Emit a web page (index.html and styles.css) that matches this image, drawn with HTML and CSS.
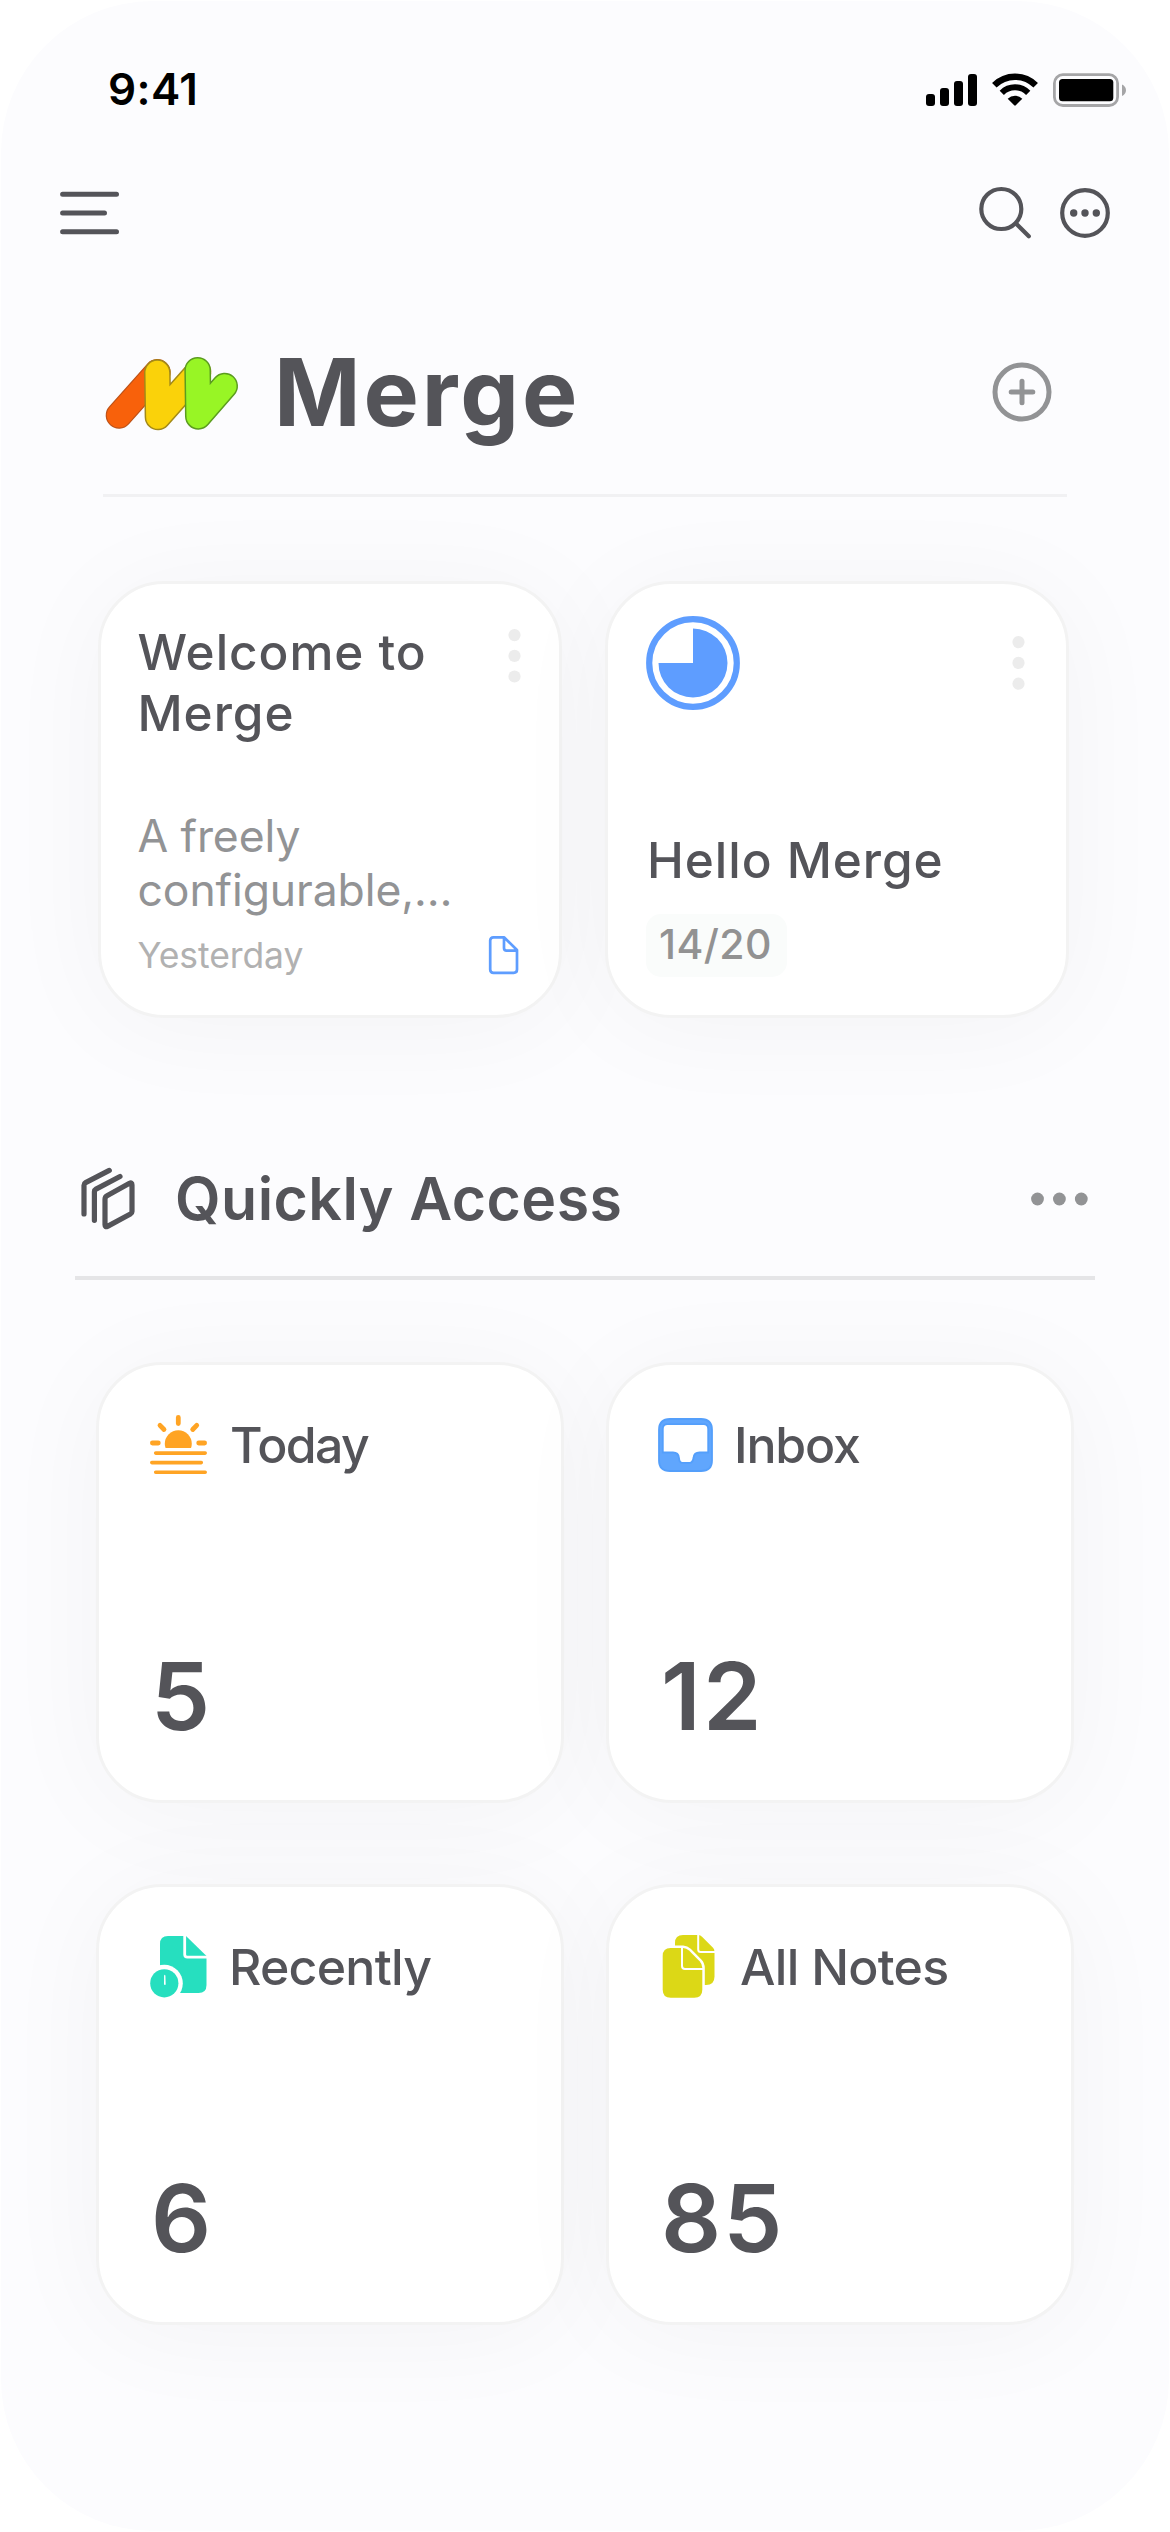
FILE: index.html
```html
<!DOCTYPE html>
<html lang="en">
<head>
<meta charset="utf-8">
<title>Merge</title>
<link rel="stylesheet" href="styles.css">
</head>
<body>
<main class="screen">
  <div class="status-bar">
    <span class="time">9:41</span>
    <svg class="status-icons" width="200" height="34" viewBox="0 0 200 34">
      <rect x="0" y="21" width="9" height="12" rx="3"/>
      <rect x="14" y="15" width="9" height="18" rx="3"/>
      <rect x="28" y="8" width="9" height="25" rx="3"/>
      <rect x="42" y="1" width="9" height="32" rx="3"/>
      <path d="M68.3 12.3a29.3 29.3 0 0 1 41.4 0" fill="none" stroke="#000" stroke-width="6.4"/>
      <path d="M75.8 19.8a18.6 18.6 0 0 1 26.4 0" fill="none" stroke="#000" stroke-width="6"/>
      <path d="M81.7 25.7a10.3 10.3 0 0 1 14.6 0L89.8 32.3q-.8.8-1.6 0z"/>
      <rect x="128.4" y="1.7" width="63.2" height="30.8" rx="8.5" fill="none" stroke="#a5a5a7" stroke-width="2.8"/>
      <rect x="133" y="6" width="54.3" height="22.2" rx="3.5"/>
      <path d="M196 11.5c5.3 2.4 5.3 9.1 0 11.5z" fill="#a5a5a7"/>
    </svg>
  </div>

  <nav class="toolbar">
    <svg width="60" height="44" viewBox="0 0 60 44" class="line-icon">
      <path d="M2.6 3.2H56.5M2.6 22H44.5M2.6 40.7H56.5" stroke-width="5"/>
    </svg>
    <div class="toolbar-actions">
      <svg width="52" height="52" viewBox="0 0 52 52" class="line-icon">
        <circle cx="22.3" cy="22" r="20"/>
        <path d="M37 36.5 49.8 49.3"/>
      </svg>
      <svg width="50" height="50" viewBox="0 0 50 50" class="line-icon">
        <circle cx="25" cy="25" r="22.8"/>
        <g class="solid"><circle cx="13.7" cy="25" r="3.7"/><circle cx="25" cy="25" r="3.7"/><circle cx="36.3" cy="25" r="3.7"/></g>
      </svg>
    </div>
  </nav>

  <header class="page-head">
    <svg width="136" height="77.333" viewBox="72 105 408 232" class="logo">
      <path d="M117 286 232 157" stroke="#bd5218" stroke-width="80"/>
      <path d="M117 286 232 157" stroke="#f8610b" stroke-width="73"/>
      <path d="M232 158 234 291 354 156" stroke="#a38a18" stroke-width="80"/>
      <path d="M232 158 234 291 354 156" stroke="#fad20a" stroke-width="71"/>
      <path d="M353 151 355 289 434 198" stroke="#5b9c1f" stroke-width="80"/>
      <path d="M353 151 355 289 434 198" stroke="#98f525" stroke-width="71"/>
    </svg>
    <h1>Merge</h1>
    <svg width="60" height="60" viewBox="0 0 60 60" class="add">
      <circle cx="30" cy="30" r="27"/>
      <path d="M30 19.2V40.8M19.2 30H40.8"/>
    </svg>
  </header>

  <section class="notes">
    <article class="card note">
      <div class="note-top">
        <h2>Welcome to<br>Merge</h2>
        <svg width="13" height="54" viewBox="0 0 13 54" class="kebab"><circle cx="6.5" cy="6.1" r="6.1"/><circle cx="6.5" cy="26.9" r="6.1"/><circle cx="6.5" cy="47.5" r="6.1"/></svg>
      </div>
      <p class="preview">A freely<br>configurable,…</p>
      <div class="note-foot">
        <span>Yesterday</span>
        <svg width="34" height="40" viewBox="0 0 34 40" class="doc">
          <path d="M6.5 2.3H17L30 15V34.5Q30 37.8 26.7 37.8H6.5Q3.2 37.8 3.2 34.5V5.6Q3.2 2.3 6.5 2.3zM17 2.3V13Q17 15.6 19.6 15.6H30"/>
        </svg>
      </div>
    </article>
    <article class="card project">
      <div class="project-top">
        <svg width="94" height="94" viewBox="0 0 94 94">
          <circle cx="47" cy="47" r="43.8" fill="none" stroke="#5e9dff" stroke-width="6.2"/>
          <path d="M47 47V12.5A34.5 34.5 0 1 1 12.5 47z" fill="#5e9dff"/>
        </svg>
        <svg width="13" height="54" viewBox="0 0 13 54" class="kebab"><circle cx="6.5" cy="6.1" r="6.1"/><circle cx="6.5" cy="26.9" r="6.1"/><circle cx="6.5" cy="47.7" r="6.1"/></svg>
      </div>
      <h2>Hello Merge</h2>
      <span class="badge">14/20</span>
    </article>
  </section>

  <header class="section-head">
    <svg width="54" height="62" viewBox="0 0 54 62" class="line-icon stack">
      <path d="M28.3 2.4 4.6 14.6Q3 15.5 3 17.2V46M39 8.5 15 21.1Q13.4 22 13.4 23.7V52.3"/>
      <path d="M26 27.8 48.5 15.3Q51 14.1 51 17V43.5Q51 45.2 49.4 46.1L26.5 58.4Q24 59.5 24 56.7V31.2Q24 28.9 26 27.8z"/>
    </svg>
    <h2>Quickly Access</h2>
    <svg width="57" height="14" viewBox="0 0 57 14" class="more"><circle cx="6.5" cy="7" r="6.4"/><circle cx="28.4" cy="7" r="6.4"/><circle cx="50.3" cy="7" r="6.4"/></svg>
  </header>

  <section class="quick">
    <article class="card tile today">
      <div class="tile-head">
        <svg width="60" height="64" viewBox="0 0 60 64" fill="none" stroke="#ffa424" stroke-linecap="round">
          <path d="M15.6 35Q14.8 33 14.8 30.7A13.5 13.5 0 0 1 41.8 30.7Q41.8 33 41 35z" fill="#ffa424" stroke="none"/>
          <path d="M28.3 4.5V10.5M10 12.3 14 16.5M46.7 12.3 42.7 16.5M2.4 30H8.3M48.7 30H54.6" stroke-width="4.8"/>
          <path d="M5.7 40.1H55.2M1.8 49.6H51.3M5.7 59.2H55.2" stroke-width="3.6"/>
        </svg>
        <h3>Today</h3>
      </div>
      <strong>5</strong>
    </article>
    <article class="card tile inbox">
      <div class="tile-head">
        <svg width="54" height="64" viewBox="0 0 54 64">
          <path fill-rule="evenodd" d="M10 6H41Q52 6 52 17V47.5Q52 58 41 58H10Q-1 58-1 47.5V17Q-1 6 10 6zM7.500 11.200Q2.800 11.200 2.800 16V39.500H13Q18.500 39.500 19 45 19.300 49.900 22.500 49.900H29.500Q32.700 49.900 33.500 45 34 39.500 39.500 39.500H48.200V16Q48.200 11.200 43.500 11.200z" fill="#60a6fd" stroke="#549ffb" stroke-width="1.8"/>
        </svg>
        <h3>Inbox</h3>
      </div>
      <strong>12</strong>
    </article>
    <article class="card tile recent">
      <div class="tile-head">
        <svg width="59" height="64" viewBox="0 0 59 64" fill="#26dfbf">
          <path d="M18 1H36L56.500 21V50Q56.500 58 48.500 58H10V9Q10 1 18 1z"/>
          <path d="M34.700 0V19.500Q34.700 22.200 37.400 22.200H58" fill="none" stroke="#fff" stroke-width="2.8"/>
          <circle cx="14.3" cy="48.3" r="18.5" fill="#fff"/>
          <circle cx="14.3" cy="48.3" r="14.1"/>
          <path d="M14.100 40.500 14 49.800H15.700L15.400 40.800Q14.800 39 14.100 40.500z" fill="#fff"/>
        </svg>
        <h3>Recently</h3>
      </div>
      <strong>6</strong>
    </article>
    <article class="card tile all">
      <div class="tile-head">
        <svg width="60" height="64" viewBox="0 0 60 64" fill="#dcd816">
          <path d="M23 0H38.500Q40.500.2 42 1.700L53 12.700Q54.500 14.200 54.500 17V41.500Q54.500 50 46 50H15V8Q15 0 23 0z"/>
          <path d="M38.200-1V14.500Q38.200 17 40.700 17H56" fill="none" stroke="#fff" stroke-width="2"/>
          <path d="M10.700 13H23Q26.500 13.200 29 15.600L39.600 26.200Q42.300 29 42.300 33V54.700Q42.300 62.700 34.300 62.700H10.700Q2.700 62.700 2.700 54.700V21Q2.700 13 10.700 13z" stroke="#fff" stroke-width="5" paint-order="stroke"/>
          <path d="M22 12V31Q22 34 25 34H43" fill="none" stroke="#fff" stroke-width="2"/>
        </svg>
        <h3>All Notes</h3>
      </div>
      <strong>85</strong>
    </article>
  </section>
</main>
</body>
</html>
```
FILE: styles.css
```css
* { box-sizing: border-box; margin: 0; padding: 0; }

body {
  background: #fff;
  color: #545459;
  font-family: Inter, "Noto Sans", sans-serif;
}

svg { display: block; flex: none; overflow: visible; }

.screen {
  width: 1168px;
  height: 2530px;
  margin: 1px;
  overflow: hidden;
  border-radius: 152px;
  background: #fcfcfe;
}

.status-bar {
  display: flex;
  align-items: center;
  justify-content: space-between;
  height: 177px;
  padding: 0 43px 2px 107px;
}

.time {
  color: #000;
  font-size: 44px;
  font-weight: 600;
  line-height: 54px;
  letter-spacing: 0.4px;
}

.status-icons { margin-top: 3px; }

.toolbar {
  display: flex;
  align-items: center;
  justify-content: space-between;
  height: 70px;
  padding: 0 59px;
}

.toolbar-actions { display: flex; align-items: center; gap: 29px; }

.line-icon {
  fill: none;
  stroke: #545459;
  stroke-width: 4.2;
  stroke-linecap: round;
  stroke-linejoin: round;
}

.solid { fill: #545459; stroke: none; }

.page-head {
  display: flex;
  align-items: center;
  height: 249px;
  margin: 0 102px;
  padding: 95px 15px 53px 1px;
  border-bottom: 3px solid #f1f1f3;
}

.logo { margin-top: 4px; fill: none; stroke-linecap: round; stroke-linejoin: round; }

.page-head h1 {
  margin-left: 34px;
  font-size: 93px;
  font-weight: 700;
  line-height: 98px;
  letter-spacing: 2.9px;
}

.add {
  margin-left: auto;
  fill: none;
  stroke: #929395;
  stroke-width: 5;
  stroke-linecap: round;
}

.card {
  border: 3px solid #f3f3f3;
  border-radius: 66px;
  background: #fff;
  box-shadow: 0 8px 110px rgba(0, 0, 0, 0.04);
}

.notes {
  display: grid;
  grid-template-columns: 464px 464px;
  gap: 43px;
  height: 437px;
  margin: 84px 0 0 97px;
}

.note { padding: 38px 38px 38px 36.5px; }

.note-top, .note-foot, .project-top {
  display: flex;
  justify-content: space-between;
}

.note h2, .project h2 {
  font-size: 49.5px;
  font-weight: 500;
  line-height: 60.5px;
  letter-spacing: 0.95px;
}

.kebab { margin-top: 7px; fill: #ececec; }

.preview {
  margin-top: 66px;
  color: #929395;
  font-size: 44.5px;
  line-height: 54px;
  letter-spacing: -0.1px;
}

.note-foot {
  align-items: center;
  height: 40px;
  margin-top: 18px;
  color: #b1b1b1;
  font-size: 35.5px;
  letter-spacing: -0.1px;
}

.doc { fill: none; stroke: #5e9dff; stroke-width: 2.7; stroke-linejoin: round; }

.project {
  display: flex;
  flex-direction: column;
  align-items: flex-start;
  padding: 32px 41px 38px 38px;
}

.project-top { align-self: stretch; margin-bottom: auto; }

.project .kebab { margin-top: 20px; }

.project h2 { margin-left: 1px; }

.badge {
  width: 141px;
  height: 63px;
  margin-top: 24px;
  padding-left: 13px;
  border-radius: 15px;
  background: #fafcfb;
  color: #929292;
  font-size: 41px;
  font-weight: 500;
  line-height: 60px;
  letter-spacing: 0.4px;
}

.section-head {
  display: flex;
  align-items: center;
  height: 262px;
  margin: 0 74px;
  padding: 151px 7px 47px 6px;
  border-bottom: 4px solid #e5e5e7;
}

.stack { stroke-width: 5.2; }

.section-head h2 {
  margin-left: 40px;
  font-size: 59px;
  font-weight: 600;
  line-height: 60px;
  letter-spacing: 0.45px;
}

.more { margin-left: auto; fill: #929395; }

.quick {
  display: grid;
  grid-template: 441px 441px / 468px 468px;
  gap: 81px 42px;
  margin: 82px 0 0 95px;
}

.tile {
  display: flex;
  flex-direction: column;
  justify-content: space-between;
  padding: 48px 30px 57.5px 51px;
}

.tile-head { display: flex; align-items: center; gap: 20px; height: 64px; }

.tile h3 { font-size: 50px; font-weight: 500; line-height: 64px; }

.today h3 { letter-spacing: -1.6px; }
.inbox h3 { letter-spacing: -1.2px; }
.recent h3 { letter-spacing: -0.75px; }
.all h3 { letter-spacing: -0.7px; }

.tile strong {
  padding-left: 1px;
  font-size: 94px;
  font-weight: 600;
  line-height: 93px;
  letter-spacing: 2.2px;
}
```
